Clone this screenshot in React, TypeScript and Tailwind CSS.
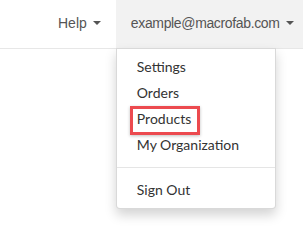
const menuItems = ['Settings', 'Orders', 'Products', 'My Organization'];

const Caret = () => (
  <span className="ml-[6px] inline-block h-0 w-0 border-x-[4px] border-t-[4px] border-x-transparent border-t-[#555] align-middle" />
);

const App = () => {
  return (
    <div className="h-[249px] w-[303px] overflow-hidden bg-white">
      <nav className="flex h-[49px] border-b border-[#e7e7e7] bg-white pl-[43px] font-['Liberation_Sans',Arial,sans-serif] text-[14px] text-[#555]">
        <a className="flex h-[48px] shrink-0 items-center px-[15px] pb-[2px]" href="#">
          Help
          <Caret />
        </a>
        <div className="relative shrink-0">
          <a className="flex h-[48px] items-center bg-[#f2f2f2] px-[15px] pb-[2px] tracking-[-0.35px]" href="#">
            example@macrofab.com
            <Caret />
          </a>

          <div className="absolute left-0 top-full z-10 w-[160px] rounded-b-[4px] border border-[rgba(0,0,0,0.15)] bg-white py-[5px] font-['Lato',sans-serif] text-[14px] text-[#333] shadow-[0_6px_12px_rgba(0,0,0,0.175)]">
            <ul>
              {menuItems.map((item) => (
                <li key={item} className="relative">
                  <a className="block px-[20px] py-[3px] leading-[20px]" href="#">
                    {item}
                  </a>
                  {item === 'Products' && (
                    <span className="pointer-events-none absolute left-[13px] top-0 h-[29px] w-[70px] border-[3px] border-[#ec4a4f] shadow-[0_1px_3px_rgba(0,0,0,0.25)]" />
                  )}
                </li>
              ))}
            </ul>
            <div className="my-[9px] h-px bg-[#e5e5e5]" />
            <a className="block px-[20px] py-[3px] leading-[20px]" href="#">
              Sign Out
            </a>
          </div>
        </div>
      </nav>
    </div>
  );
};

export default App;
